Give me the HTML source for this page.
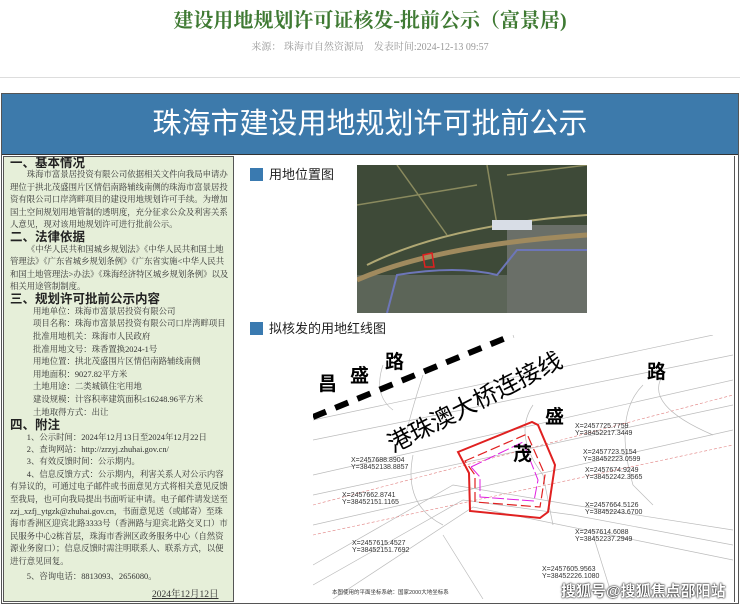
<!DOCTYPE html>
<html><head><meta charset="utf-8"><style>
*{margin:0;padding:0;box-sizing:border-box}
body{width:740px;height:606px;background:#fff;position:relative;overflow:hidden;font-family:"Liberation Serif","Noto Serif CJK SC",serif}
.t{position:absolute;left:0;width:740px;text-align:center;top:4px;font-size:20px;color:#3f7a33;font-weight:bold;font-family:"Liberation Serif","Noto Serif CJK SC",serif}
.s{position:absolute;left:0;width:740px;text-align:center;top:38px;font-size:10px;color:#999}
.hr{position:absolute;left:0;top:77px;width:740px;height:1px;background:#ddd}
.box{position:absolute;left:1px;top:93px;width:738px;height:511px;border:1px solid #555;background:#fff}
.hd{position:absolute;left:0;top:0;width:736px;height:61px;background:#3d7aab;color:#fff;font-size:29px;text-align:center;line-height:61px;font-family:"Liberation Sans","Noto Sans CJK SC",sans-serif;border-bottom:1px solid #333}
.lp{position:absolute;left:1px;top:62px;width:231px;height:446px;background:#e6efd9;border:1px solid #555;font-size:8.4px;color:#333;line-height:12.4px;padding:0 3px 0 6px;overflow:hidden}
.lp h4{font-size:12.5px;font-family:"Liberation Sans","Noto Sans CJK SC",sans-serif;color:#222;line-height:12.4px}
.lp p{text-indent:2em}
.lp .i{padding-left:23px;line-height:12.6px}
.rb{position:absolute;left:732px;top:62px;width:1px;height:446px;background:#555}
.lab{position:absolute;font-family:"Liberation Sans","Noto Sans CJK SC",sans-serif;font-size:13px;color:#222}
.lab i{display:inline-block;width:13px;height:13px;background:#3a7ab0;vertical-align:-2px;margin-right:6px}
</style></head><body>
<div class="t">建设用地规划许可证核发-批前公示（富景居)</div>
<div class="s">来源：&nbsp;珠海市自然资源局&nbsp;&nbsp;&nbsp;&nbsp;发表时间:2024-12-13 09:57</div>
<div class="hr"></div>
<div class="box">
<div class="hd">珠海市建设用地规划许可批前公示</div>
<div class="lp">
<h4>一、基本情况</h4>
<p>珠海市富景居投资有限公司依据相关文件向我局申请办理位于拱北茂盛围片区情侣南路辅线南侧的珠海市富景居投资有限公司口岸湾畔项目的建设用地规划许可手续。为增加国土空间规划用地管制的透明度，充分征求公众及利害关系人意见，现对该用地规划许可进行批前公示。</p>
<h4>二、法律依据</h4>
<p>《中华人民共和国城乡规划法》《中华人民共和国土地管理法》《广东省城乡规划条例》《广东省实施&lt;中华人民共和国土地管理法&gt;办法》《珠海经济特区城乡规划条例》以及相关用途管制制度。</p>
<h4>三、规划许可批前公示内容</h4>
<div class="i">用地单位：珠海市富景居投资有限公司<br>项目名称：珠海市富景居投资有限公司口岸湾畔项目<br>批准用地机关：珠海市人民政府<br>批准用地文号：珠香置换2024-1号<br>用地位置：拱北茂盛围片区情侣南路辅线南侧<br>用地面积：9027.82平方米<br>土地用途：二类城镇住宅用地<br>建设规模：计容积率建筑面积≤16248.96平方米<br>土地取得方式：出让</div>
<h4>四、附注</h4>
<div>
<p>1、公示时间：2024年12月13日至2024年12月22日</p>
<p>2、查询网站：http://zrzyj.zhuhai.gov.cn/</p>
<p>3、有效反馈时间：公示期内。</p>
<p>4、信息反馈方式：公示期内，利害关系人对公示内容有异议的，可通过电子邮件或书面意见方式将相关意见反馈至我局，也可向我局提出书面听证申请。电子邮件请发送至zzj_xzfj_ytgzk@zhuhai.gov.cn，书面意见送（或邮寄）至珠海市香洲区迎宾北路3333号（香洲路与迎宾北路交叉口）市民服务中心2栋首层，珠海市香洲区政务服务中心（自然资源业务窗口）；信息反馈时需注明联系人、联系方式，以便进行意见回复。</p>
<p style="margin-top:3px">5、咨询电话：8813093、2656080。</p>
</div>
<div style="position:absolute;left:148px;top:432px;text-decoration:underline;font-size:9.5px">2024年12月12日</div>
</div>
<div class="rb"></div>
<div class="lab" style="left:248px;top:70px"><i></i>用地位置图</div>
<svg style="position:absolute;left:355px;top:71px" width="230" height="148" viewBox="0 0 230 148">
<rect width="230" height="148" fill="#3e4a38"/>
<rect x="150" y="60" width="80" height="88" fill="#6a6f68"/>
<rect x="0" y="110" width="150" height="38" fill="#5c6558"/>
<path d="M0 115 Q80 80 230 70" stroke="#a08a5e" stroke-width="5" fill="none"/>
<path d="M10 100 Q90 60 230 50" stroke="#b0a874" stroke-width="2" fill="none"/>
<path d="M30 148 L40 110 Q100 100 140 110 L160 85 L230 85" stroke="#6d76b8" stroke-width="2" fill="none"/>
<path d="M40 0 L90 70 M130 0 L140 60 M0 40 L120 20 M150 10 L230 0" stroke="#8a8a5e" stroke-width="1.5" fill="none"/>
<rect x="135" y="55" width="40" height="10" fill="#d8dde6"/>
<path d="M66 90 L75 88 L77 102 L68 102 Z" stroke="#e02020" stroke-width="1.5" fill="none"/>
</svg>
<div class="lab" style="left:248px;top:224px"><i></i>拟核发的用地红线图</div>
<svg style="position:absolute;left:311px;top:241px" width="420" height="264" viewBox="0 0 420 264" font-family="Liberation Sans,Noto Sans CJK SC,sans-serif">
<rect width="420" height="264" fill="#fff"/>
<g stroke="#bbb" stroke-width="0.7" fill="none">
<path d="M0 85 L400 0 M0 105 L420 20 M0 140 L420 45 M0 160 L420 70 M0 190 L420 95"/>
<path d="M0 230 L140 150 L260 170 L420 195 M0 250 L150 165 L260 180 L420 210 M20 264 L160 172 L420 225"/>
<path d="M70 30 Q60 60 80 75 M110 40 Q100 70 90 110 M220 70 Q200 100 230 140 L240 190 M330 50 Q300 80 320 150 L340 170 M350 40 Q330 70 400 100"/>
<path d="M100 120 Q90 170 130 190 M130 200 L170 264 M280 200 L300 264"/>
</g>
<g stroke="#e08080" stroke-width="0.6" fill="none" stroke-dasharray="3 2"><path d="M0 170 L420 60 M0 200 L420 110"/></g>
<path d="M0 82 L200 0" stroke="#000" stroke-width="6" stroke-dasharray="14 10" fill="none"/>
<path d="M145 117 L219 87 L225 90 L242 130 L235 177 L227 183 L157 176 L156 138 Z" stroke="#e02020" stroke-width="2" fill="none"/>
<path d="M152 126 L214 99 L232 140 L227 172 L162 167 L162 140 Z" stroke="#e02020" stroke-width="1.2" stroke-dasharray="10 4" fill="none"/>
<path d="M158 132 L210 107 L225 145 L221 166 L167 162 L167 142 Z" stroke="#e020e0" stroke-width="1" stroke-dasharray="12 3" fill="none"/>
<g font-size="19" fill="#000" font-weight="bold"><text x="5" y="55">昌</text><text x="37" y="47">盛</text><text x="72" y="33">路</text><text x="334" y="43">路</text><text x="232" y="88">盛</text><text x="200" y="125">茂</text>
<text transform="translate(80,118) rotate(-27)" font-size="24" font-weight="normal">港珠澳大桥连接线</text></g>
<g font-size="7" fill="#333">
<text x="38" y="127">X=2457688.8904</text><text x="38" y="134">Y=38452138.8857</text>
<text x="29" y="162">X=2457662.8741</text><text x="29" y="169">Y=38452151.1165</text>
<text x="39" y="210">X=2457615.4527</text><text x="39" y="217">Y=38452151.7692</text>
<text x="262" y="93">X=2457725.7759</text><text x="262" y="100">Y=38452217.3449</text>
<text x="270" y="119">X=2457723.5154</text><text x="270" y="126">Y=38452223.0599</text>
<text x="272" y="137">X=2457674.9249</text><text x="272" y="144">Y=38452242.3565</text>
<text x="272" y="172">X=2457664.5126</text><text x="272" y="179">Y=38452243.6700</text>
<text x="262" y="199">X=2457614.6088</text><text x="262" y="206">Y=38452237.2949</text>
<text x="229" y="236">X=2457605.9563</text><text x="229" y="243">Y=38452226.1080</text>
<text x="19" y="259" font-size="5.5">本图使用的平面坐标系统：国家2000大地坐标系</text></g>
</svg>
<div style="position:absolute;left:559px;top:486px;font-family:'Liberation Sans','Noto Sans CJK SC',sans-serif;font-size:15px;color:#fff;font-weight:bold;text-shadow:0 0 2px #000,0 0 1px #000">搜狐号@搜狐焦点邵阳站</div>
</div>
</body></html>
